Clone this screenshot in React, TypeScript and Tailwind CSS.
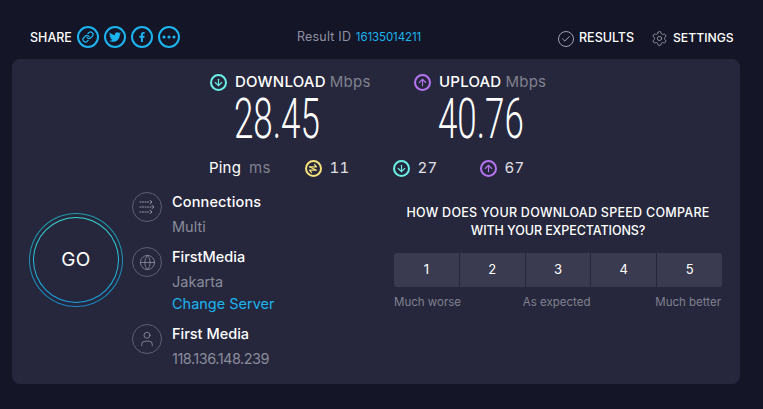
import React from "react";
import { Link, Check, Settings, User, Globe, ArrowDown, ArrowUp } from "lucide-react";
import { FaTwitter, FaFacebookF } from "react-icons/fa";

const Circle = ({ c, children }: { c: string; children: React.ReactNode }) => (
  <span className={`flex h-[17px] w-[17px] shrink-0 items-center justify-center rounded-full border-2 ${c}`}>{children}</span>
);
const Share = ({ children }: { children: React.ReactNode }) => (
  <span className="flex h-[22px] w-[22px] shrink-0 items-center justify-center rounded-full border-2 border-[#1cb4f0] text-[#1cb4f0]">{children}</span>
);
const InfoIcon = ({ children }: { children: React.ReactNode }) => (
  <span className="mt-[3px] flex h-[30px] w-[30px] shrink-0 items-center justify-center rounded-full border border-[#5f6072] text-[#9a9baa]">{children}</span>
);
const PingGlyph = () => (
  <svg width="11" height="11" viewBox="0 0 11 11" fill="none" stroke="currentColor" strokeWidth="1.2" strokeLinecap="round" strokeLinejoin="round">
    <path d="M1.5 3.8h7L6.4 1.4" />
    <path d="M1.5 3.8 8.5 7.2H1.5L3.6 9.6" />
  </svg>
);
const ConnGlyph = () => (
  <svg width="16" height="14" viewBox="0 0 16 14" fill="none" stroke="currentColor" strokeWidth="1" strokeLinecap="round" strokeLinejoin="round">
    <path d="M1 2h10" strokeDasharray="1 1.5" />
    <path d="M1 7h12" strokeDasharray="1 1.5" />
    <path d="M1 12h10" strokeDasharray="1 1.5" />
    <path d="M11 .5 13 2l-2 1.5" />
    <path d="M13 5.5 15 7l-2 1.5" />
    <path d="M11 10.500l2 1.5-2 1.500" />
  </svg>
);
const Dots = () => (
  <svg width="14" height="4" viewBox="0 0 14 4" fill="currentColor">
    <circle cx="2" cy="2" r="1.6" />
    <circle cx="7" cy="2" r="1.6" />
    <circle cx="12" cy="2" r="1.6" />
  </svg>
);
const Speed = ({ children }: { children: React.ReactNode }) => (
  <div className="ml-[24px] h-[56px] origin-left scale-x-[0.635] font-['Roboto',sans-serif] text-[55px] font-light leading-[56px] text-white">{children}</div>
);

export default function App() {
  return (
    <div className="flex h-[409px] w-[763px] flex-col overflow-hidden bg-[#141526] font-['Inter',sans-serif] text-white">
      <div className="flex h-[59px] items-center pl-[30px] pt-[15px] text-[12.5px] font-medium">
        <span className="mt-[2px] w-[47px]">SHARE</span>
        <div className="flex items-center gap-[5px]">
          <Share><Link size={12} strokeWidth={2.5} /></Share>
          <Share><FaTwitter size={12} /></Share>
          <Share><FaFacebookF size={10} /></Share>
          <Share><Dots /></Share>
        </div>
        <div className="ml-[117px] mt-[1px] w-[261px] text-[12.5px] font-normal tracking-[0.2px] text-[#8f90a3]">Result ID <span className="ml-[1px] text-[11.5px] tracking-[-0.1px] text-[#1cb4f0]">16135014211</span></div>
        <span className="mt-[3px] flex h-4 w-4 items-center justify-center rounded-full border border-[#a0a1ad] text-[#c5c6cf]"><Check size={10} /></span>
        <span className="ml-[5px] mt-[3px] w-[72px]">RESULTS</span>
        <Settings size={17} strokeWidth={1.2} className="mt-[3px] text-[#a0a1ad]" />
        <span className="ml-[5px] mt-[3px] text-[12.2px]">SETTINGS</span>
      </div>
      <div className="mx-[12px] flex h-[325px] w-[728px] flex-col rounded-[8px] bg-[#26273c]">
        <div className="ml-[198px] mt-[14px] flex">
          <div className="w-[204px]">
            <div className="flex h-[18px] items-center gap-[8px] text-[15px] font-medium leading-[18px] tracking-[0.2px]"><Circle c="border-[#6af0e6] text-[#6af0e6]"><ArrowDown size={11} strokeWidth={2.5} /></Circle><span>DOWNLOAD <span className="font-normal text-[#80818f]">Mbps</span></span></div>
            <Speed>28.45</Speed>
          </div>
          <div>
            <div className="flex h-[18px] items-center gap-[8px] text-[15px] font-medium leading-[18px] tracking-[0.2px]"><Circle c="border-[#b774f2] text-[#b774f2]"><ArrowUp size={11} strokeWidth={2.5} /></Circle><span>UPLOAD <span className="font-normal text-[#80818f]">Mbps</span></span></div>
            <Speed>40.76</Speed>
          </div>
        </div>
        <div className="ml-[197px] mt-[10px] flex h-[22px] items-center text-[15px] tabular-nums tracking-[0.2px]">
          <span>Ping</span><span className="ml-[8px] text-[#80818f]">ms</span>
          <span className="ml-[34px]"><Circle c="border-[#f5e27a] text-[#f5e27a]"><PingGlyph /></Circle></span><span className="ml-[8px] w-[20px] text-[#e0e0e6]">11</span>
          <span className="ml-[43px]"><Circle c="border-[#6af0e6] text-[#6af0e6]"><ArrowDown size={11} strokeWidth={2.5} /></Circle></span><span className="ml-[8px] w-[20px] text-[#e0e0e6]">27</span>
          <span className="ml-[42px]"><Circle c="border-[#b774f2] text-[#b774f2]"><ArrowUp size={11} strokeWidth={2.5} /></Circle></span><span className="ml-[8px] text-[#e0e0e6]">67</span>
        </div>
        <div className="mt-[11px] flex">
          <div className="ml-[17px] mt-[23px] h-[94px] w-[94px] rounded-full bg-gradient-to-b from-[#1f9aa5] to-[#1a87c5] p-px">
            <div className="h-full w-full rounded-full bg-[#26273c] p-[3px]">
              <div className="h-full w-full rounded-full bg-gradient-to-b from-[#37d8d0] to-[#1c9fe0] p-px">
                <div className="flex h-full w-full items-center justify-center rounded-full bg-[#26273c] text-[19px] font-normal tracking-[0.4px]">GO</div>
              </div>
            </div>
          </div>
          <div className="ml-[9px] mt-[-1px] w-[262px] text-[14.5px] leading-[25px]">
            <div className="flex gap-[10px]">
              <InfoIcon><ConnGlyph /></InfoIcon>
              <div><div className="font-medium tracking-[0.15px]">Connections</div><div className="text-[#8a8b9b]">Multi</div></div>
            </div>
            <div className="mt-[5px] flex gap-[10px]">
              <InfoIcon><Globe size={17} strokeWidth={1} /></InfoIcon>
              <div><div className="font-medium">FirstMedia</div><div className="text-[#8a8b9b]">Jakarta</div><div className="leading-[20px] text-[#1cb4f0]">Change Server</div></div>
            </div>
            <div className="mt-[7px] flex gap-[10px]">
              <InfoIcon><User size={18} strokeWidth={1} /></InfoIcon>
              <div><div className="font-medium">First Media</div><div className="tracking-[-0.5px] text-[#8a8b9b]">118.136.148.239</div></div>
            </div>
          </div>
          <div className="w-[328px]">
            <div className="mt-[14px] text-center text-[12.5px] font-medium leading-[18px]">
              <div className="tracking-[0.27px]">HOW DOES YOUR DOWNLOAD SPEED COMPARE</div>
              <div className="tracking-[-0.08px]">WITH YOUR EXPECTATIONS?</div>
            </div>
            <div className="mt-[13px] flex h-[34px] gap-px overflow-hidden rounded-[3px]">
              {[1, 2, 3, 4, 5].map((n) => <div key={n} className="flex flex-1 items-center justify-center bg-[#3a3b50] text-[13px]">{n}</div>)}
            </div>
            <div className="mt-[8px] flex justify-between pr-px text-[11.5px] leading-[14px] text-[#80818f]"><span>Much worse</span><span className="mr-[3px]">As expected</span><span>Much better</span></div>
          </div>
        </div>
      </div>
    </div>
  );
}
